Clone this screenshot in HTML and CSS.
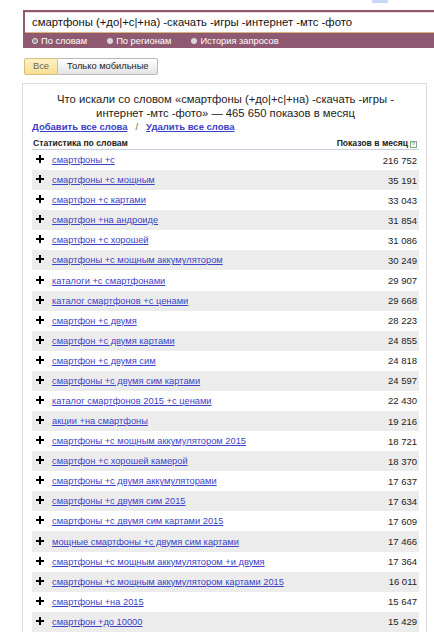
FILE: index.html
```html
<!DOCTYPE html>
<html lang="ru">
<head>
<meta charset="utf-8">
<title>Wordstat</title>
<link rel="stylesheet" href="styles.css">
</head>
<body>
<div class="topstrip"><span class="topmark"></span></div>
<div class="searchbar">
  <div class="query">смартфоны (+до|+с|+на) -скачать -игры -интернет -мтс -фото</div>
  <div class="modes">
    <span class="mode"><span class="radio checked"></span>По словам</span>
    <span class="mode"><span class="radio"></span>По регионам</span>
    <span class="mode"><span class="radio"></span>История запросов</span>
  </div>
</div>
<div class="tabs">
  <span class="tab active">Все</span><span class="tab">Только мобильные</span>
</div>
<div class="panel">
  <p class="summary">Что искали со словом «смартфоны (+до|+с|+на) -скачать -игры -<br>интернет -мтс -фото» — 465 650 показов в месяц</p>
  <div class="actions"><a href="#">Добавить все слова</a><span class="sep">/</span><a href="#">Удалить все слова</a></div>
  <div class="thead"><span>Статистика по словам</span><span>Показов в месяц<span class="help">?</span></span></div>
  <div class="rows">
    <div class="row"><svg class="plus" viewBox="0 0 8 8"><path d="M4 0v8M0 4h8"/></svg><a href="#">смартфоны +с</a><span class="num">216 752</span></div>
    <div class="row"><svg class="plus" viewBox="0 0 8 8"><path d="M4 0v8M0 4h8"/></svg><a href="#">смартфоны +с мощным</a><span class="num">35 191</span></div>
    <div class="row"><svg class="plus" viewBox="0 0 8 8"><path d="M4 0v8M0 4h8"/></svg><a href="#">смартфон +с картами</a><span class="num">33 043</span></div>
    <div class="row"><svg class="plus" viewBox="0 0 8 8"><path d="M4 0v8M0 4h8"/></svg><a href="#">смартфон +на андроиде</a><span class="num">31 854</span></div>
    <div class="row"><svg class="plus" viewBox="0 0 8 8"><path d="M4 0v8M0 4h8"/></svg><a href="#">смартфон +с хорошей</a><span class="num">31 086</span></div>
    <div class="row"><svg class="plus" viewBox="0 0 8 8"><path d="M4 0v8M0 4h8"/></svg><a href="#">смартфоны +с мощным аккумулятором</a><span class="num">30 249</span></div>
    <div class="row"><svg class="plus" viewBox="0 0 8 8"><path d="M4 0v8M0 4h8"/></svg><a href="#">каталоги +с смартфонами</a><span class="num">29 907</span></div>
    <div class="row"><svg class="plus" viewBox="0 0 8 8"><path d="M4 0v8M0 4h8"/></svg><a href="#">каталог смартфонов +с ценами</a><span class="num">29 668</span></div>
    <div class="row"><svg class="plus" viewBox="0 0 8 8"><path d="M4 0v8M0 4h8"/></svg><a href="#">смартфон +с двумя</a><span class="num">28 223</span></div>
    <div class="row"><svg class="plus" viewBox="0 0 8 8"><path d="M4 0v8M0 4h8"/></svg><a href="#">смартфон +с двумя картами</a><span class="num">24 855</span></div>
    <div class="row"><svg class="plus" viewBox="0 0 8 8"><path d="M4 0v8M0 4h8"/></svg><a href="#">смартфон +с двумя сим</a><span class="num">24 818</span></div>
    <div class="row"><svg class="plus" viewBox="0 0 8 8"><path d="M4 0v8M0 4h8"/></svg><a href="#">смартфоны +с двумя сим картами</a><span class="num">24 597</span></div>
    <div class="row"><svg class="plus" viewBox="0 0 8 8"><path d="M4 0v8M0 4h8"/></svg><a href="#">каталог смартфонов 2015 +с ценами</a><span class="num">22 430</span></div>
    <div class="row"><svg class="plus" viewBox="0 0 8 8"><path d="M4 0v8M0 4h8"/></svg><a href="#">акции +на смартфоны</a><span class="num">19 216</span></div>
    <div class="row"><svg class="plus" viewBox="0 0 8 8"><path d="M4 0v8M0 4h8"/></svg><a href="#">смартфоны +с мощным аккумулятором 2015</a><span class="num">18 721</span></div>
    <div class="row"><svg class="plus" viewBox="0 0 8 8"><path d="M4 0v8M0 4h8"/></svg><a href="#">смартфон +с хорошей камерой</a><span class="num">18 370</span></div>
    <div class="row"><svg class="plus" viewBox="0 0 8 8"><path d="M4 0v8M0 4h8"/></svg><a href="#">смартфоны +с двумя аккумуляторами</a><span class="num">17 637</span></div>
    <div class="row"><svg class="plus" viewBox="0 0 8 8"><path d="M4 0v8M0 4h8"/></svg><a href="#">смартфоны +с двумя сим 2015</a><span class="num">17 634</span></div>
    <div class="row"><svg class="plus" viewBox="0 0 8 8"><path d="M4 0v8M0 4h8"/></svg><a href="#">смартфоны +с двумя сим картами 2015</a><span class="num">17 609</span></div>
    <div class="row"><svg class="plus" viewBox="0 0 8 8"><path d="M4 0v8M0 4h8"/></svg><a href="#">мощные смартфоны +с двумя сим картами</a><span class="num">17 466</span></div>
    <div class="row"><svg class="plus" viewBox="0 0 8 8"><path d="M4 0v8M0 4h8"/></svg><a href="#">смартфоны +с мощным аккумулятором +и двумя</a><span class="num">17 364</span></div>
    <div class="row"><svg class="plus" viewBox="0 0 8 8"><path d="M4 0v8M0 4h8"/></svg><a href="#">смартфоны +с мощным аккумулятором картами 2015</a><span class="num">16 011</span></div>
    <div class="row"><svg class="plus" viewBox="0 0 8 8"><path d="M4 0v8M0 4h8"/></svg><a href="#">смартфоны +на 2015</a><span class="num">15 647</span></div>
    <div class="row"><svg class="plus" viewBox="0 0 8 8"><path d="M4 0v8M0 4h8"/></svg><a href="#">смартфон +до 10000</a><span class="num">15 429</span></div>
  </div>
</div>
</body>
</html>
```
FILE: styles.css
```css
html, body {
  margin: 0;
  padding: 0;
  background: #fff;
}
body {
  font-family: "Liberation Sans", Arial, sans-serif;
  color: #222;
  overflow: hidden;
}
.topstrip {
  height: 10px;
  padding-left: 372px;
}
.topmark {
  display: block;
  width: 16px;
  height: 3px;
  background: #c9d5f5;
}
.searchbar {
  margin-left: 23px;
  background: #8f5a71;
  padding: 2px 0 0 2px;
}
.query {
  background: #fff;
  border-top: 1px solid #e9dce2;
  border-bottom: 1px solid #d8b67c;
  height: 19px;
  padding-left: 7px;
  font-size: 11.3px;
  line-height: 19px;
  color: #111;
  white-space: nowrap;
}
.modes {
  height: 15px;
  display: flex;
  align-items: center;
  padding-left: 7px;
  gap: 20px;
  color: #fff;
  font-size: 9.3px;
}
.mode {
  display: flex;
  align-items: center;
}
.radio {
  width: 6px;
  height: 6px;
  border-radius: 50%;
  background: #dcd6d9;
  margin-right: 3px;
  box-sizing: border-box;
}
.radio.checked {
  background: #8a8a8a;
  border: 1.5px solid #eee;
}
.tabs {
  display: flex;
  margin: 10px 0 0 24px;
}
.tab {
  height: 17px;
  box-sizing: border-box;
  border: 1px solid #b8b8b8;
  padding: 0 9px;
  font-size: 9.3px;
  line-height: 15px;
  color: #222;
  background: linear-gradient(#ffffff, #e4e4e4);
  border-radius: 2px;
}
.tab.active {
  padding: 0 8px;
  color: #666;
  border-color: #d6c07a;
  background: linear-gradient(#fff0c6, #f9df92);
  border-radius: 2px 0 0 2px;
}
.tab + .tab {
  border-left: none;
  border-radius: 0 2px 2px 0;
}
.panel {
  margin: 8px 7px 0 22px;
  border: 1px solid #dcdcdc;
  border-bottom: none;
  padding: 8px 7px 0 9px;
}
.summary {
  margin: 0;
  text-align: center;
  font-size: 11.25px;
  line-height: 14px;
  color: #222;
}
.actions {
  font-size: 9.5px;
  font-weight: bold;
  line-height: 14px;
}
.actions a {
  color: #3a40c4;
  text-decoration: underline;
}
.sep {
  color: #666;
  font-weight: normal;
  margin: 0 8px;
}
.thead {
  margin-top: 2px;
  display: flex;
  justify-content: space-between;
  align-items: center;
  height: 13px;
  border-bottom: 1px solid #c9d0df;
  padding: 0 2px 0 1px;
  font-size: 8.6px;
  font-weight: bold;
  color: #222;
}
.help {
  display: inline-block;
  width: 7px;
  height: 7px;
  box-sizing: border-box;
  border: 1px solid #7ea87e;
  margin-left: 2px;
  font-size: 6px;
  line-height: 5px;
  text-align: center;
  color: #5f8f5f;
  font-weight: normal;
}
.row {
  display: flex;
  align-items: center;
  height: 20.09px;
  padding: 0 2px 0 4px;
}
.row:nth-child(even) {
  background: #ececec;
}
.plus {
  width: 8px;
  height: 8px;
  margin: -2px 8px 0 0;
  flex: none;
}
.plus path {
  stroke: #000;
  stroke-width: 2;
  fill: none;
}
.row a {
  flex: 1;
  font-size: 9.3px;
  color: #3d44c6;
  text-decoration: underline;
  white-space: nowrap;
}
.num {
  font-size: 9.5px;
  color: #222;
}
```
